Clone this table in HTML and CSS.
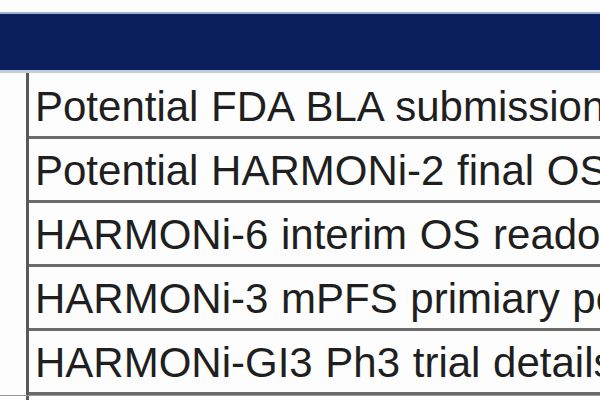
FILE: index.html
```html
<!DOCTYPE html>
<html>
<head>
<meta charset="utf-8">
<link rel="stylesheet" href="styles.css">
</head>
<body>
<div class="page">
  <div class="band"></div>
  <div class="table">
    <div class="side"></div>
    <div class="rows">
      <div class="row">Potential FDA BLA submission</div>
      <div class="row">Potential HARMONi-2 final OS</div>
      <div class="row">HARMONi-6 interim OS readout</div>
      <div class="row">HARMONi-3 mPFS primiary portion</div>
      <div class="row">HARMONi-GI3 Ph3 trial details</div>
    </div>
  </div>
  <div class="foot"><div class="foot-side"></div><div class="foot-main"></div></div>
</div>
</body>
</html>
```
FILE: styles.css
```css
html, body {
  margin: 0;
  padding: 0;
  background: #fdfdfd;
  overflow: hidden;
}
.page {
  width: 600px;
  height: 400px;
  padding-top: 12px;
  box-sizing: border-box;
  font-family: "Liberation Sans", Arial, sans-serif;
  overflow: hidden;
}
.band {
  height: 56px;
  background: #0b1f5e;
  border-top: 2px solid #9fb1cc;
  border-bottom: 3px solid #c3cddc;
}
.table {
  display: grid;
  grid-template-columns: 29px 1fr;
  padding-top: 2px;
}
.side {
  border-right: 3px solid #5a5a5a;
  margin-top: -2px;
}
.rows {
  display: flex;
  flex-direction: column;
  min-width: 0;
}
.row {
  height: 61px;
  border-bottom: 3px solid #6a6a6a;
  padding-left: 6px;
  font-size: 42px;
  line-height: 63px;
  color: #1f1f1f;
  white-space: nowrap;
  overflow: hidden;
  word-spacing: 1px;
}
.foot {
  display: grid;
  grid-template-columns: 29px 1fr;
  height: 10px;
  border-top: 1px solid #999;
}
.foot-side {
  border-right: 3px solid #5a5a5a;
}
```
